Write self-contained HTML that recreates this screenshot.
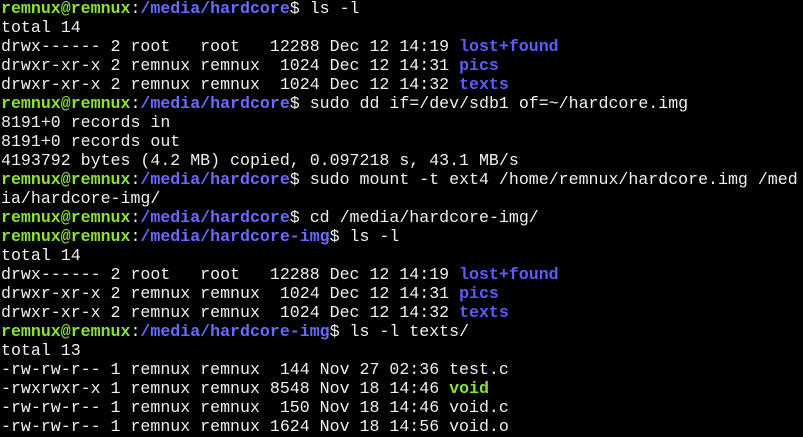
<!DOCTYPE html>
<html><head><style>
html,body{margin:0;padding:0;background:#000;width:803px;height:437px;overflow:hidden}
pre{margin:0;padding:0 0 0 1px;position:relative;top:-1px;font-family:"Liberation Mono","DejaVu Sans Mono",monospace;font-size:16.6px;line-height:19px;color:#f0f0f0;white-space:pre}
.g{color:#8ae234;font-weight:bold}
.b{color:#6a6aff;font-weight:bold}
.d{color:#5c5cff;font-weight:bold}
.v{color:#8ae234;font-weight:bold}
</style></head><body><pre><span class="g">remnux@remnux</span>:<span class="b">/media/hardcore</span>$ ls -l
total 14
drwx------ 2 root   root   12288 Dec 12 14:19 <span class="d">lost+found</span>
drwxr-xr-x 2 remnux remnux  1024 Dec 12 14:31 <span class="d">pics</span>
drwxr-xr-x 2 remnux remnux  1024 Dec 12 14:32 <span class="d">texts</span>
<span class="g">remnux@remnux</span>:<span class="b">/media/hardcore</span>$ sudo dd if=/dev/sdb1 of=~/hardcore.img
8191+0 records in
8191+0 records out
4193792 bytes (4.2 MB) copied, 0.097218 s, 43.1 MB/s
<span class="g">remnux@remnux</span>:<span class="b">/media/hardcore</span>$ sudo mount -t ext4 /home/remnux/hardcore.img /med
ia/hardcore-img/
<span class="g">remnux@remnux</span>:<span class="b">/media/hardcore</span>$ cd /media/hardcore-img/
<span class="g">remnux@remnux</span>:<span class="b">/media/hardcore-img</span>$ ls -l
total 14
drwx------ 2 root   root   12288 Dec 12 14:19 <span class="d">lost+found</span>
drwxr-xr-x 2 remnux remnux  1024 Dec 12 14:31 <span class="d">pics</span>
drwxr-xr-x 2 remnux remnux  1024 Dec 12 14:32 <span class="d">texts</span>
<span class="g">remnux@remnux</span>:<span class="b">/media/hardcore-img</span>$ ls -l texts/
total 13
-rw-rw-r-- 1 remnux remnux  144 Nov 27 02:36 test.c
-rwxrwxr-x 1 remnux remnux 8548 Nov 18 14:46 <span class="v">void</span>
-rw-rw-r-- 1 remnux remnux  150 Nov 18 14:46 void.c
-rw-rw-r-- 1 remnux remnux 1624 Nov 18 14:56 void.o
</pre></body></html>
